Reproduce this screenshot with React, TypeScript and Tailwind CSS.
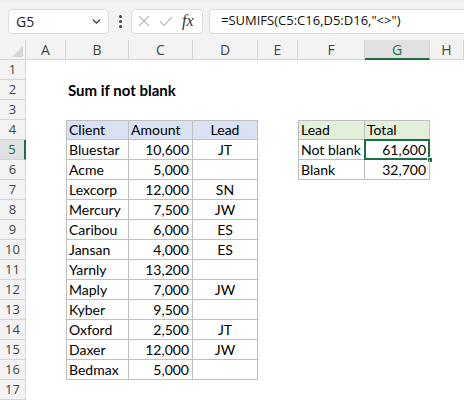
import { ChevronDown } from 'lucide-react';

// Sheet column widths: row header, A..H
const cols = ['A', 'B', 'C', 'D', 'E', 'F', 'G', 'H'];

const clients: [string, string, string][] = [
  ['Bluestar', '10,600', 'JT'],
  ['Acme', '5,000', ''],
  ['Lexcorp', '12,000', 'SN'],
  ['Mercury', '7,500', 'JW'],
  ['Caribou', '6,000', 'ES'],
  ['Jansan', '4,000', 'ES'],
  ['Yarnly', '13,200', ''],
  ['Maply', '7,000', 'JW'],
  ['Kyber', '9,500', ''],
  ['Oxford', '2,500', 'JT'],
  ['Daxer', '12,000', 'JW'],
  ['Bedmax', '5,000', ''],
];

const summary: [string, string][] = [
  ['Not blank', '61,600'],
  ['Blank', '32,700'],
];

const cellFont = { fontFamily: 'Lato, "Liberation Sans", sans-serif' };
const uiFont = { fontFamily: '"Open Sans", "Noto Sans", sans-serif' };

function Cell({ row, col }: { row: number; col: number }) {
  // col: 0 = A ... 7 = H
  const base = 'h-5 flex items-center text-[14px] text-black leading-none whitespace-nowrap';

  // title
  if (row === 2 && col === 1) {
    return <div className={`${base} text-[15px] font-bold pl-[2px] overflow-visible`}>Sum if not blank</div>;
  }

  // client table B4:D16
  if (row >= 4 && row <= 16 && col >= 1 && col <= 3) {
    const header = row === 4;
    const border = `border-r border-b border-[#bfbfbf] ${col === 1 ? 'border-l' : ''} ${header ? 'border-t bg-[#d9e1f2]' : ''}`;
    let text = '';
    let align = 'justify-start pl-[2px]';
    if (header) {
      text = ['Client', 'Amount', 'Lead'][col - 1];
      if (col === 3) align = 'justify-center';
    } else {
      const r = clients[row - 5];
      text = r[col - 1];
      if (col === 2) align = 'justify-end pr-[3px]';
      if (col === 3) align = 'justify-center';
    }
    return <div className={`${base} ${border} ${align}`}>{text}</div>;
  }

  // summary table F4:G6
  if (row >= 4 && row <= 6 && col >= 5 && col <= 6) {
    const header = row === 4;
    const border = `border-r border-b border-[#bfbfbf] ${col === 5 ? 'border-l' : ''} ${header ? 'border-t bg-[#e2efda]' : ''}`;
    let text = '';
    let align = 'justify-start pl-[2px]';
    if (header) {
      text = ['Lead', 'Total'][col - 5];
    } else {
      text = summary[row - 5][col - 5];
      if (col === 6) align = 'justify-end pr-[3px]';
    }
    const selected = row === 5 && col === 6;
    return (
      <div className={`${base} ${border} ${align} relative`}>
        {text}
        {selected && (
          <>
            <div className="absolute -left-px -top-px -right-px -bottom-px border-2 border-[#1e6e42]" />
            <div className="absolute -right-[4px] -bottom-[4px] w-[6px] h-[6px] bg-[#1e6e42] border border-white" />
          </>
        )}
      </div>
    );
  }

  return <div className={base} />;
}

export default function App() {
  const rows = Array.from({ length: 17 }, (_, i) => i + 1);

  return (
    <div className="w-[464px] h-[400px] overflow-hidden bg-white">
      {/* Formula bar */}
      <div className="h-10 bg-[#f3f3f3] border-t-2 border-[#ebebeb] flex items-center pl-2 gap-0" style={uiFont}>
        <div className="w-[101px] h-[25px] bg-white border border-[#dcdcdc] rounded-[4px] flex items-center justify-between pl-[7px] pr-[5px]">
          <span className="text-[14px] text-[#222]">G5</span>
          <ChevronDown size={13} strokeWidth={2.6} className="text-[#333]" />
        </div>
        <div className="w-[22px] flex flex-col items-center gap-[2px]">
          <div className="w-[3px] h-[3px] rounded-full bg-[#444]" />
          <div className="w-[3px] h-[3px] rounded-full bg-[#444]" />
          <div className="w-[3px] h-[3px] rounded-full bg-[#444]" />
        </div>
        <div className="w-[72px] h-[25px] bg-white border border-[#dcdcdc] rounded-[4px] flex items-center pl-[6px] gap-[9px]">
          <svg width="12" height="12" viewBox="0 0 12 12">
            <path d="M1 1 L11 11 M11 1 L1 11" stroke="#bdbdbd" strokeWidth="1.2" fill="none" />
          </svg>
          <svg width="14" height="11" viewBox="0 0 14 11">
            <path d="M1 5.5 L5 9.5 L13 1" stroke="#bdbdbd" strokeWidth="1.2" fill="none" />
          </svg>
          <span className="text-[16px] italic text-[#333] leading-none" style={{ fontFamily: '"Liberation Serif", "DejaVu Serif", serif' }}>
            fx
          </span>
        </div>
        <div className="ml-[6px] flex-1 h-[25px] bg-white border border-[#dcdcdc] rounded-l-[4px] border-r-0 flex items-center pl-[11px]">
          <span className="text-[13px] text-[#111] whitespace-nowrap">=SUMIFS(C5:C16,D5:D16,"&lt;&gt;")</span>
        </div>
      </div>

      {/* Sheet */}
      <div className="grid grid-cols-[26px_40px_63px_64px_65px_40px_67px_65px_1fr]">
        {/* Column headers */}
        <div className="h-5 bg-[#f3f3f3] border-b border-r border-[#d4d4d4] relative">
          <svg className="absolute right-[2px] bottom-[2px]" width="11" height="11" viewBox="0 0 11 11">
            <path d="M11 0 L11 11 L0 11 Z" fill="#d6d6d6" />
          </svg>
        </div>
        {cols.map((c) => (
          <div
            key={c}
            className={
              c === 'G'
                ? 'h-5 bg-[#e1e1e1] border-b-2 border-b-[#1e6e42] border-r border-r-[#d4d4d4] flex items-center justify-center text-[14px] text-[#1e6e42]'
                : 'h-5 bg-[#f3f3f3] border-b border-r border-[#d4d4d4] flex items-center justify-center text-[14px] text-[#444]'
            }
            style={uiFont}
          >
            {c}
          </div>
        ))}

        {rows.map((r) => (
          <div key={r} className="contents" style={cellFont}>
            <div
              className={
                r === 5
                  ? 'h-5 bg-[#e1e1e1] border-r-2 border-r-[#1e6e42] border-b border-b-[#d4d4d4] flex items-center justify-center text-[13px] text-[#1e6e42]'
                  : 'h-5 bg-[#f3f3f3] border-r border-b border-[#d4d4d4] flex items-center justify-center text-[13px] text-[#444]'
              }
              style={uiFont}
            >
              {r}
            </div>
            {cols.map((_, ci) => (
              <Cell key={ci} row={r} col={ci} />
            ))}
          </div>
        ))}
      </div>
    </div>
  );
}
